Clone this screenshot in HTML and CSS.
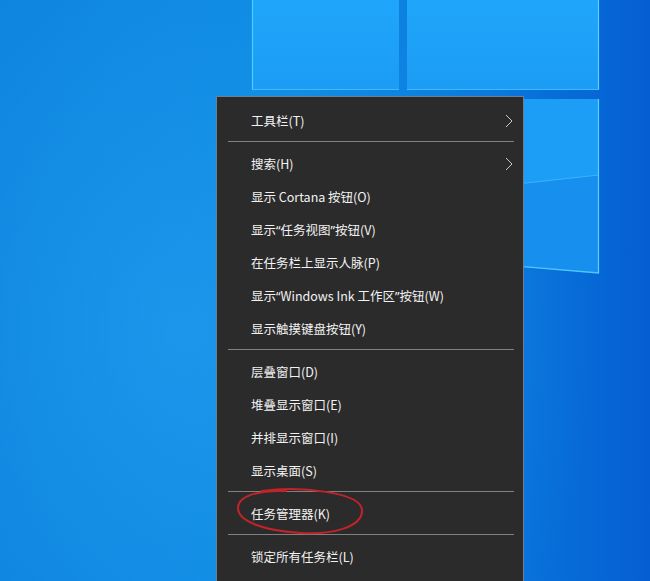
FILE: index.html
```html
<!DOCTYPE html>
<html lang="zh-CN">
<head>
    <meta charset="UTF-8">
    <meta name="viewport" content="width=device-width, initial-scale=1.0">
    <title>任务栏菜单</title>
    <link rel="stylesheet" href="styles.css">
</head>
<body>

    <div class="desktop">
        <!-- wallpaper: windows logo panes -->
        <svg class="wallpaper" width="650" height="581" viewBox="0 0 650 581">
            <defs>
                <linearGradient id="paneTop" x1="0" y1="0" x2="0" y2="1">
                    <stop offset="0" stop-color="#1fa6fb"/>
                    <stop offset="1" stop-color="#1c9cf4"/>
                </linearGradient>
            </defs>
            <rect x="252" y="-2" width="147" height="92" fill="url(#paneTop)"/>
            <rect x="407" y="-2" width="192" height="92" fill="url(#paneTop)"/>
            <line x1="252.5" y1="0" x2="252.5" y2="90" stroke="#4ccfff" stroke-width="1.2"/>
            <line x1="598.5" y1="0" x2="598.5" y2="90" stroke="#5bd2ff" stroke-width="1.2"/>
            <line x1="407" y1="89.5" x2="599" y2="89.5" stroke="#3cbcff" stroke-width="1"/>
            <line x1="252" y1="89.5" x2="399" y2="89.5" stroke="#3cbcff" stroke-width="1"/>
            <polygon points="407,99 599,99 599,273 407,257" fill="#1c9ef6"/>
            <polygon points="407,196 599,175 599,273 407,257" fill="#168fee"/>
            <line x1="407" y1="196" x2="599" y2="175" stroke="#3ab4fb" stroke-width="1"/>
            <line x1="407" y1="257" x2="599" y2="273" stroke="#4cc6ff" stroke-width="1.4"/>
            <line x1="598.5" y1="99" x2="598.5" y2="273" stroke="#5bd2ff" stroke-width="1.2"/>
        </svg>

        <div class="context-menu">
            <div class="menu-item">
                <span>工具栏(T)</span>
                <svg class="chevron" width="8" height="14" viewBox="0 0 8 14"><polyline points="1,1 7,7 1,13"/></svg>
            </div>
            <div class="separator"></div>
            <div class="menu-item">
                <span>搜索(H)</span>
                <svg class="chevron" width="8" height="14" viewBox="0 0 8 14"><polyline points="1,1 7,7 1,13"/></svg>
            </div>
            <div class="menu-item"><span>显示 Cortana 按钮(O)</span></div>
            <div class="menu-item"><span>显示<span class="q">“</span>任务视图<span class="q">”</span>按钮(V)</span></div>
            <div class="menu-item"><span>在任务栏上显示人脉(P)</span></div>
            <div class="menu-item"><span>显示<span class="q">“</span>Windows Ink 工作区<span class="q">”</span>按钮(W)</span></div>
            <div class="menu-item"><span>显示触摸键盘按钮(Y)</span></div>
            <div class="separator"></div>
            <div class="menu-item"><span>层叠窗口(D)</span></div>
            <div class="menu-item"><span>堆叠显示窗口(E)</span></div>
            <div class="menu-item"><span>并排显示窗口(I)</span></div>
            <div class="menu-item"><span>显示桌面(S)</span></div>
            <div class="separator"></div>
            <div class="menu-item"><span>任务管理器(K)</span></div>
            <div class="separator"></div>
            <div class="menu-item"><span>锁定所有任务栏(L)</span></div>
        </div>

        <!-- hand drawn red circle -->
        <svg class="annotation" width="650" height="581" viewBox="0 0 650 581">
            <path d="M 262 491 C 300 486, 361 492, 362 510 C 363 527, 332 535, 301 533 C 266 531, 238 522, 238 508 C 238 496, 258 490, 286 491"/>
        </svg>
    </div>

</body>
</html>
```

FILE: styles.css
```css
body {
    margin: 0;
    padding: 0;
    overflow: hidden;
    font-family: "Noto Sans CJK SC", "Noto Sans", sans-serif;
}

.desktop {
    position: relative;
    width: 650px;
    height: 581px;
    overflow: hidden;
    background:
        radial-gradient(ellipse 420px 520px at 180px 330px, rgba(40, 165, 245, 0.55), rgba(40, 165, 245, 0) 100%),
        linear-gradient(90deg, #0a80dc 0%, #0b86e0 40%, #0877dc 75%, #065fd2 100%);
}

.wallpaper {
    position: absolute;
    top: 0;
    left: 0;
}

.context-menu {
    position: absolute;
    top: 96px;
    left: 216px;
    width: 306px;
    height: 490px;
    padding-top: 7px;
    background-color: #2b2b2b;
    border: 1px solid #6f7f92;
    border-bottom: none;
}

.menu-item {
    display: flex;
    align-items: center;
    justify-content: space-between;
    height: 33px;
    padding: 0 10px 0 34px;
    color: #f2f2f2;
    font-size: 12.5px;
    white-space: nowrap;
}

.q {
    font-family: "Noto Sans", sans-serif;
}

.chevron polyline {
    fill: none;
    stroke: #c8c8c8;
    stroke-width: 1;
}

.separator {
    height: 1px;
    margin: 4px 9px 5px 11px;
    background-color: #808080;
}

.annotation {
    position: absolute;
    top: 0;
    left: 0;
    pointer-events: none;
}

.annotation path {
    fill: none;
    stroke: #c0242a;
    stroke-width: 2;
    stroke-linecap: round;
}
```
